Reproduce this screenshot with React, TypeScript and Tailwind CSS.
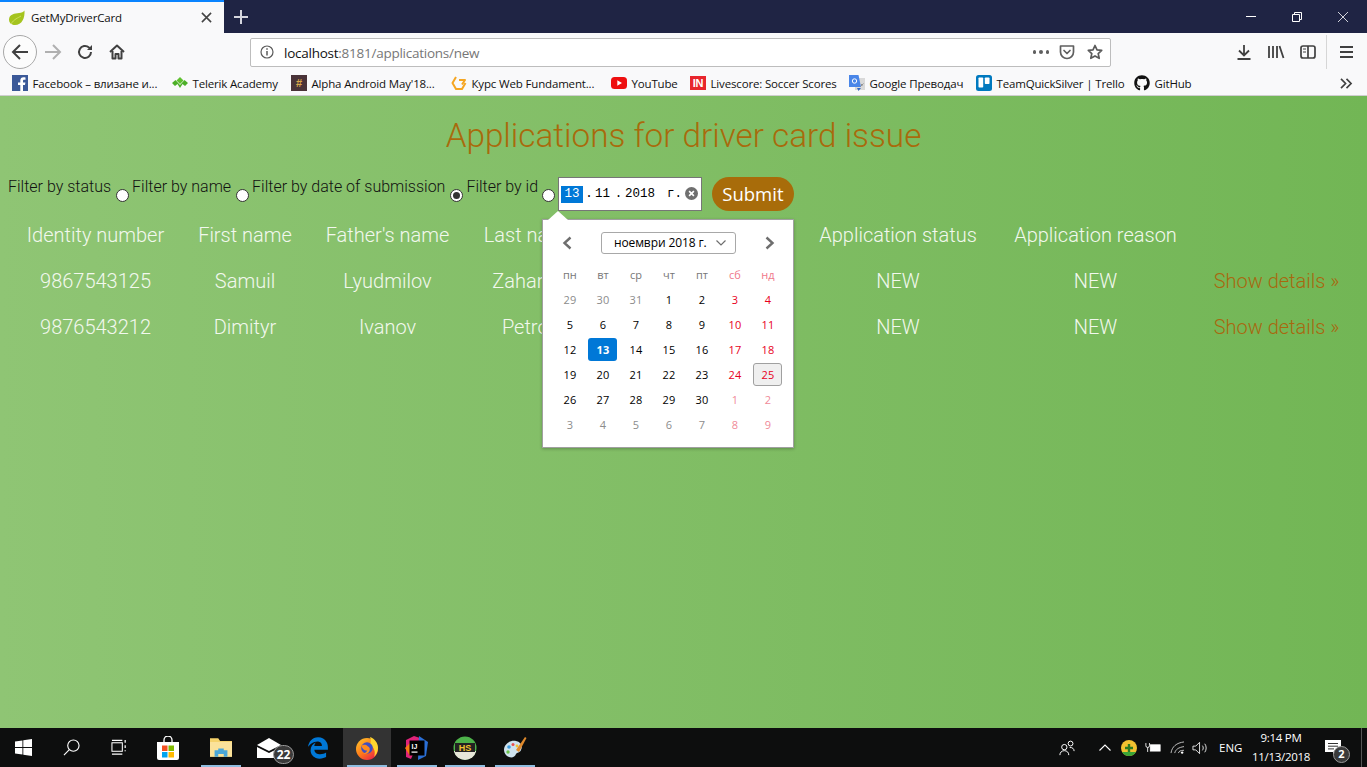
import { FaEdgeLegacy, FaGithub } from "react-icons/fa";

const sans = "font-['Open_Sans','Liberation_Sans',sans-serif]";

/* ── Browser chrome icons ── */
const BackIcon = () => (
  <svg viewBox="0 0 20 20" className="w-[20px] h-[20px]" fill="none" stroke="#404040" strokeWidth="2">
    <path d="M18 10H3M10 3l-7 7 7 7" />
  </svg>
);
const ForwardIcon = () => (
  <svg viewBox="0 0 20 20" className="w-[20px] h-[20px]" fill="none" stroke="#b0b0b0" strokeWidth="2">
    <path d="M2 10h15M10 3l7 7-7 7" />
  </svg>
);
const ReloadIcon = () => (
  <svg viewBox="0 0 16 16" className="w-[16px] h-[16px]" fill="none" stroke="#404040" strokeWidth="2">
    <path d="M14 8a6 6 0 1 1-2-4.500L14 5" />
    <path d="M15 1v5h-5" fill="#404040" stroke="none" />
  </svg>
);
const HomeIcon = () => (
  <svg viewBox="0 0 16 16" className="w-[16px] h-[16px]" fill="none" stroke="#404040" strokeWidth="2" strokeLinejoin="round">
    <path d="M1 8l7-6.500L15 8" />
    <path d="M3.500 7v7.500h3V10h3v4.500h3V7" />
  </svg>
);
const InfoIcon = () => (
  <svg viewBox="0 0 14 14" className="w-[14px] h-[14px]" fill="none" stroke="#5a5a5a" strokeWidth="1.200">
    <circle cx="7" cy="7" r="6" />
    <path d="M7 6v4.500" strokeWidth="1.500" />
    <path d="M7 3.200v1.600" strokeWidth="1.500" />
  </svg>
);
const PocketIcon = () => (
  <svg viewBox="0 0 16 16" className="w-[16px] h-[16px]" fill="none" stroke="#5f5f5f" strokeWidth="1.700" strokeLinecap="round" strokeLinejoin="round">
    <path d="M1.500 2h13v6a6.500 6.500 0 0 1-13 0z" />
    <path d="M5 6.500l3 3 3-3" />
  </svg>
);
const StarIcon = () => (
  <svg viewBox="0 0 16 16" className="w-[16px] h-[16px]" fill="none" stroke="#5a5a5a" strokeWidth="1.700" strokeLinejoin="round">
    <path d="M8 1.500l2 4.400 4.700.5-3.500 3.200 1 4.700L8 11.900l-4.200 2.400 1-4.700L1.300 6.400 6 5.900z" />
  </svg>
);
const DownloadIcon = () => (
  <svg viewBox="0 0 16 16" className="w-[16px] h-[16px]" fill="none" stroke="#404040" strokeWidth="1.800">
    <path d="M8 1v10M3 6.500L8 11.500l5-5M1.500 15h13" />
  </svg>
);
const LibraryIcon = () => (
  <svg viewBox="0 0 18 16" className="w-[18px] h-[16px]" fill="none" stroke="#404040" strokeWidth="1.800">
    <path d="M2 2v12M6 2v12M10 2v12M12.500 2l4 12" />
  </svg>
);
const SidebarIcon = () => (
  <svg viewBox="0 0 16 16" className="w-[16px] h-[16px]" fill="none" stroke="#404040" strokeWidth="1.700">
    <rect x="1" y="2" width="14" height="12" rx="2" />
    <path d="M8 2v12" />
    <path d="M3 5h3M3 8h3" strokeWidth="1" />
  </svg>
);

/* ── Favicons ── */
const SpringLeaf = () => (
  <svg viewBox="0 0 16 16" className="w-[16px] h-[16px]">
    <path d="M15.500.5C16 8 13 15 6 15 2 15 0 12.500 0 9.500 0 4 6 3.500 10 3c2.500-.3 4.500-1 5.500-2.500z" fill="#a5c41f" />
    <path d="M2 14C5 9 9 8 12 6" stroke="#d6e36c" strokeWidth="0.800" fill="none" />
  </svg>
);
const FacebookIcon = () => (
  <svg viewBox="0 0 16 16" className="w-[16px] h-[16px]">
    <rect width="16" height="16" fill="#3b5998" />
    <path d="M11 16v-6h2l.4-2.500H11V6c0-.8.3-1.200 1.200-1.200h1.300V2.500C13 2.400 12.300 2.300 11.500 2.300 9.500 2.300 8.300 3.500 8.300 5.600v1.900H6V10h2.300v6z" fill="#fff" />
  </svg>
);
const TelerikIcon = () => (
  <svg viewBox="0 0 16 16" className="w-[16px] h-[16px]">
    <path d="M8 2l3.500 3.500L8 9 4.500 5.500z" fill="#5fc12f" />
    <path d="M0 8l3.500-3 4.500 5 4.500-5L16 8l-3 3-2.500-2L8 13 5.500 9 3 11z" fill="#4caf27" />
  </svg>
);
const AlphaIcon = () => (
  <span className="w-[16px] h-[16px] bg-[#4a3338] text-[#dba94a] text-[11px] font-bold flex items-center justify-center font-['Liberation_Sans',sans-serif]">
    #
  </span>
);
const CourseIcon = () => (
  <svg viewBox="0 0 16 16" className="w-[16px] h-[16px]" fill="none" stroke="#f5a623" strokeWidth="2" strokeLinejoin="round">
    <path d="M5 2L1.500 8 5 14h6l3.500-6" />
    <path d="M8 5h6L11 9.500" />
  </svg>
);
const YoutubeIcon = () => (
  <svg viewBox="0 0 16 16" className="w-[16px] h-[16px]">
    <rect y="2" width="16" height="12" rx="3.500" fill="#ee0f0f" />
    <path d="M6.300 5.200v5.600L11 8z" fill="#fff" />
  </svg>
);
const LivescoreIcon = () => (
  <span className="w-[16px] h-[14px] bg-[#e8262d] text-white text-[11px] font-bold leading-none flex items-center justify-center font-['Liberation_Sans',sans-serif]">
    IN
  </span>
);
const TranslateIcon = () => (
  <svg viewBox="0 0 16 16" className="w-[16px] h-[16px]">
    <rect x="6" y="3" width="10" height="12" fill="#d9d9d9" />
    <path d="M0 0h9.500L12 12H0z" fill="#4a86e8" />
    <path d="M8 13l1.500 3 2.500-3z" fill="#3367c6" />
    <circle cx="5.500" cy="6" r="2.200" fill="none" stroke="#fff" strokeWidth="1" />
    <path d="M12 9l1.500 1.500M14.500 8.500l-3 3" stroke="#8a8a8a" strokeWidth="0.900" />
  </svg>
);
const TrelloIcon = () => (
  <svg viewBox="0 0 16 16" className="w-[16px] h-[16px]">
    <rect width="16" height="16" rx="2.500" fill="#0079bf" />
    <rect x="2.500" y="2.500" width="4.700" height="10" rx="0.800" fill="#fff" />
    <rect x="8.800" y="2.500" width="4.700" height="6.500" rx="0.800" fill="#fff" />
  </svg>
);

const bookmarks = [
  { Icon: FacebookIcon, label: "Facebook – влизане и...", width: "w-[160px]" },
  { Icon: TelerikIcon, label: "Telerik Academy", width: "w-[119px]" },
  { Icon: AlphaIcon, label: "Alpha Android May'18...", width: "w-[160px]" },
  { Icon: CourseIcon, label: "Курс Web Fundament...", width: "w-[160px]" },
  { Icon: YoutubeIcon, label: "YouTube", width: "w-[79px]" },
  { Icon: LivescoreIcon, label: "Livescore: Soccer Scores", width: "w-[159px]" },
  { Icon: TranslateIcon, label: "Google Преводач", width: "w-[127px]" },
  { Icon: TrelloIcon, label: "TeamQuickSilver | Trello", width: "w-[158px]" },
  { Icon: () => <FaGithub className="w-[16px] h-[16px] text-[#111]" />, label: "GitHub", width: "w-[70px]" },
];

/* ── Taskbar icons ── */
const WindowsLogo = () => (
  <svg viewBox="0 0 16 16" className="w-[17px] h-[17px]" fill="#fff">
    <path d="M0 2.300L7 1.300v6.300H0zM7.800 1.200L16 0v7.600H7.800zM0 8.400h7v6.300L0 13.700zM7.800 8.400H16V16l-8.200-1.200z" />
  </svg>
);
const SearchGlyph = () => (
  <svg viewBox="0 0 18 18" className="w-[17px] h-[17px]" fill="none" stroke="#fff" strokeWidth="1.200">
    <circle cx="11" cy="7" r="6" />
    <path d="M6.700 11.300L1 17" />
  </svg>
);
const TaskViewGlyph = () => (
  <svg viewBox="0 0 18 18" className="w-[17px] h-[17px]" fill="none" stroke="#fff" strokeWidth="1.100">
    <rect x="1" y="4" width="11" height="9" />
    <path d="M1 1.500h11M1 16h11M15 1v3M15 6.500v3M15 12v1" strokeWidth="1.300" />
  </svg>
);
const StoreGlyph = () => (
  <svg viewBox="0 0 24 24" className="w-[24px] h-[24px]">
    <path d="M8 7V4a4 4 0 0 1 8 0v3" fill="none" stroke="#fff" strokeWidth="1.300" />
    <path d="M1 6h22v16a2 2 0 0 1-2 2H3a2 2 0 0 1-2-2z" fill="#fff" />
    <rect x="6" y="9.500" width="5.500" height="5.500" fill="#f25022" />
    <rect x="12.500" y="9.500" width="5.500" height="5.500" fill="#7fba00" />
    <rect x="6" y="16" width="5.500" height="5.500" fill="#00a4ef" />
    <rect x="12.500" y="16" width="5.500" height="5.500" fill="#ffb900" />
  </svg>
);
const FolderGlyph = () => (
  <svg viewBox="0 0 24 20" className="w-[22px] h-[19px]">
    <path d="M0 0h9l2 3h13v17H0z" fill="#f6d36b" />
    <path d="M0 4h24v16H0z" fill="#fbe29a" />
    <path d="M5 20v-7h4v-2h6v2h4v7h-4v-3H9v3z" fill="#4aa7d8" />
  </svg>
);
const MailGlyph = () => (
  <svg viewBox="0 0 24 20" className="w-[24px] h-[20px]" fill="#fff">
    <path d="M0 7l12-7 12 7-12 6z" />
    <path d="M0 9l12 6 12-6v11H0z" />
  </svg>
);
const FirefoxGlyph = () => (
  <svg viewBox="0 0 24 24" className="w-[24px] h-[24px]">
    <defs>
      <linearGradient id="fx" x1="0" y1="0" x2="0.8" y2="1">
        <stop offset="0" stopColor="#ffcb2e" />
        <stop offset="0.55" stopColor="#ff7a18" />
        <stop offset="1" stopColor="#e8204a" />
      </linearGradient>
    </defs>
    <circle cx="12" cy="13" r="11" fill="url(#fx)" />
    <path d="M15 1c5 2 8 6 8 11 0 4-2 7-4 9 2-5 0-10-4-12 1-3 1-6 0-8z" fill="#ffd52e" />
    <circle cx="12" cy="12" r="5.800" fill="#3d4fc4" />
    <path d="M6.500 10c2-2 5-1 6 0 1.500 1 3 2 2 5-1 2.500-4 3.500-6.500 2.500C10 17 12 16 12 14.500 10 15 7 13 6.500 10z" fill="#ff8a1e" />
  </svg>
);
const IdeaGlyph = () => (
  <svg viewBox="0 0 24 24" className="w-[24px] h-[24px]">
    <path d="M1 4l8-4 6 2-9 21-5-2z" fill="#e0237a" />
    <path d="M14 0l9 6-2 14-8 4z" fill="#2a6fd6" />
    <path d="M0 12l6-6 4 6-5 8z" fill="#f97a12" />
    <rect x="4.500" y="4.500" width="15" height="15" fill="#000" />
    <text x="6.500" y="12.500" fontSize="7" fill="#fff" fontWeight="700" fontFamily="Liberation Sans, sans-serif">IJ</text>
    <rect x="6.500" y="15.500" width="6" height="1.200" fill="#fff" />
  </svg>
);
const HsGlyph = () => (
  <svg viewBox="0 0 24 24" className="w-[24px] h-[24px]">
    <circle cx="12" cy="12" r="11.500" fill="#4db34a" />
    <path d="M.8 15h22.400A11.500 11.500 0 0 1 .8 15z" fill="#e6e6d8" />
    <rect x="2" y="7" width="20" height="9" fill="#222" />
    <text x="12" y="14.800" fontSize="9" fill="#f2c12e" fontWeight="700" textAnchor="middle" fontFamily="Liberation Sans, sans-serif">HS</text>
  </svg>
);
const PaintGlyph = () => (
  <svg viewBox="0 0 24 24" className="w-[24px] h-[24px]">
    <path d="M1 14C1 8 7 4 13 5c5 1 7 5 5 9-1 3-4 2-5 4-1 3-4 4-7 3-3-1-5-4-5-7z" fill="#cfe3ee" />
    <circle cx="6" cy="11" r="1.800" fill="#3c9be0" />
    <circle cx="10" cy="8.500" r="1.500" fill="#e94f4f" />
    <circle cx="5" cy="16" r="1.700" fill="#6ac24a" />
    <circle cx="14" cy="10" r="1.400" fill="#f4c430" />
    <path d="M13 14L22 1l1.500 1L16 16z" fill="#e08a2c" />
  </svg>
);

const taskbarApps = [
  { Icon: WindowsLogo, cell: "w-[46px]" },
  { Icon: SearchGlyph, cell: "w-[50px]" },
  { Icon: TaskViewGlyph, cell: "w-[46px]" },
  { Icon: StoreGlyph, cell: "w-[52px]" },
];

const Underlined = ({ children, active }: { children: React.ReactNode; active?: boolean }) => (
  <div className={`relative h-full w-[48px] flex items-center justify-center ${active ? "bg-[#333333]" : ""}`}>
    {children}
    <span className="absolute bottom-0 left-[4px] right-[4px] h-[2px] bg-[#8fbde0]" />
  </div>
);

/* ── Page content ── */
const headers = ["Identity number", "First name", "Father's name", "Last name", "", "Application status", "Application reason", ""];

const rows = [
  ["9867543125", "Samuil", "Lyudmilov", "Zahariev"],
  ["9876543212", "Dimityr", "Ivanov", "Petrov"],
];

const Radio = ({ checked }: { checked?: boolean }) => (
  <span className="ml-[5px] mr-[3px] mt-[12px] w-[13px] h-[13px] rounded-full bg-white border border-[#333] flex items-center justify-center shrink-0">
    {checked && <span className="w-[7px] h-[7px] rounded-full bg-[#333]" />}
  </span>
);

const weeks = [
  ["29", "30", "31", "1", "2", "3", "4"],
  ["5", "6", "7", "8", "9", "10", "11"],
  ["12", "13", "14", "15", "16", "17", "18"],
  ["19", "20", "21", "22", "23", "24", "25"],
  ["26", "27", "28", "29", "30", "1", "2"],
  ["3", "4", "5", "6", "7", "8", "9"],
];

const dayColor = (row: number, col: number, day: string) => {
  const outside = (row === 0 && Number(day) > 20) || row === 5 || (row === 4 && Number(day) < 10);
  if (col >= 5) return outside ? "text-[#f08a98]" : "text-[#e8001c]";
  return outside ? "text-[#8c8c8c]" : "text-black";
};

const Calendar = () => (
  <div className={`absolute left-[-17px] top-[41px] w-[252px] h-[229px] bg-white border border-[#a0a0a0] shadow-[0_1px_3px_rgba(0,0,0,0.25)] px-[10px] pt-[12px] font-normal ${sans}`}>
    <svg viewBox="0 0 20 9" className="absolute left-[5px] top-[-9px] w-[20px] h-[9px]">
      <path d="M0 9L10 0l10 9z" fill="#fff" />
    </svg>
    <div className="flex items-center h-[22px]">
      <svg viewBox="0 0 12 14" className="ml-[8px] w-[12px] h-[14px]" fill="none" stroke="#6e6e6e" strokeWidth="2.400">
        <path d="M9.500 1.500L3.500 7l6 5.500" />
      </svg>
      <div className="ml-[28px] w-[135px] h-[22px] border border-[#a8a8a8] rounded-[3px] flex items-center pl-[12px] text-[12px] tracking-[-0.1px] text-black">
        ноември 2018 г.
        <svg viewBox="0 0 10 6" className="ml-[9px] w-[10px] h-[6px]" fill="none" stroke="#6e6e6e" strokeWidth="1.200">
          <path d="M.5.500L5 5 9.500.500" />
        </svg>
      </div>
      <svg viewBox="0 0 12 14" className="ml-[28px] w-[12px] h-[14px]" fill="none" stroke="#6e6e6e" strokeWidth="2.400">
        <path d="M2.500 1.500L8.500 7l-6 5.500" />
      </svg>
    </div>
    <div className="grid grid-cols-[repeat(7,33px)] auto-rows-[25px] mt-[8px] ml-[0.5px] text-[11px] text-center items-center justify-items-center">
      {["пн", "вт", "ср", "чт", "пт", "сб", "нд"].map((d, i) => (
        <span key={d} className={i >= 5 ? "text-[#f0788a]" : "text-[#777]"}>{d}</span>
      ))}
      {weeks.map((week, r) =>
        week.map((day, c) => {
          const selected = r === 2 && c === 1;
          const today = r === 3 && c === 6;
          return (
            <span
              key={`${r}-${c}`}
              className={`flex items-center justify-center w-[29px] h-[23px] rounded-[3px] ${
                selected
                  ? "bg-[#0078d7] text-white font-bold"
                  : today
                  ? "bg-[#efefef] border border-[#a0a0a0] text-[#e8001c]"
                  : dayColor(r, c, day)
              }`}
            >
              {day}
            </span>
          );
        })
      )}
    </div>
  </div>
);

const DateInput = () => (
  <div className="relative w-[144px] h-[34px] bg-white border border-[#767676] flex items-center font-['Liberation_Mono',monospace] font-normal text-[12.500px] text-black">
    <span className="ml-[2px] w-[22px] h-[17px] bg-[#0078d7] text-white flex items-center justify-center leading-none">13</span>
    <span className="ml-px w-[10px] text-center">.</span>
    <span className="w-[16px] ml-[1px]">11</span>
    <span className="ml-px w-[13px] text-center">.</span>
    <span className="w-[32px]">2018</span>
    <span className="ml-[10px]">г.</span>
    <svg viewBox="0 0 12 12" className="absolute right-[3px] top-[9px] w-[13px] h-[13px]">
      <circle cx="6" cy="6" r="6" fill="#6f6f6f" />
      <path d="M3.800 3.800l4.400 4.400M8.200 3.800L3.800 8.200" stroke="#fff" strokeWidth="1.500" />
    </svg>
    <Calendar />
  </div>
);

export default function App() {
  return (
    <div className="w-[1367px] h-[767px] overflow-hidden flex flex-col">
      {/* Tab strip */}
      <div className="h-[33px] bg-[#1f2444] flex items-stretch shrink-0">
        <div className={`w-[224px] bg-[#f9f9fa] border-t-2 border-[#0a84ff] flex items-center pl-[9px] ${sans} text-[11.500px] tracking-[-0.15px] text-[#111]`}>
          <SpringLeaf />
          <span className="ml-[6px]">GetMyDriverCard</span>
          <svg viewBox="0 0 12 12" className="ml-auto mr-[12px] w-[11px] h-[11px]" fill="none" stroke="#444" strokeWidth="1.700">
            <path d="M1 1l10 10M11 1L1 11" />
          </svg>
        </div>
        <div className="w-[34px] flex items-center justify-center">
          <svg viewBox="0 0 14 14" className="w-[14px] h-[14px]" fill="none" stroke="#d5d6de" strokeWidth="2">
            <path d="M7 0v14M0 7h14" />
          </svg>
        </div>
        <div className="ml-auto mr-px flex">
          <div className="w-[46px] flex items-center justify-center">
            <span className="w-[10px] h-px bg-white" />
          </div>
          <div className="w-[46px] flex items-center justify-center">
            <svg viewBox="0 0 10 10" className="w-[10px] h-[10px]" fill="none" stroke="#fff">
              <path d="M.5 2.500h7v7h-7zM2.500 2.500v-2h7v7h-2" />
            </svg>
          </div>
          <div className="w-[46px] flex items-center justify-center">
            <svg viewBox="0 0 10 10" className="w-[10px] h-[10px]" fill="none" stroke="#fff" strokeWidth="0.800">
              <path d="M0 0l10 10M10 0L0 10" />
            </svg>
          </div>
        </div>
      </div>

      {/* Nav toolbar */}
      <div className="h-[37px] pt-px bg-[#f9f9fa] flex items-center shrink-0">
        <div className="ml-[3px] w-[34px] h-[34px] rounded-full border border-[#a8a8a8] bg-[#fcfcfc] flex items-center justify-center">
          <BackIcon />
        </div>
        <div className="ml-[6px] w-[20px] flex justify-center"><ForwardIcon /></div>
        <div className="ml-[12px] w-[20px] flex justify-center"><ReloadIcon /></div>
        <div className="ml-[12px] w-[20px] flex justify-center"><HomeIcon /></div>
        <div className={`ml-[123px] w-[861px] h-[29px] bg-white border border-[#bdbdbd] rounded-[2px] flex items-center pl-[9px] pr-[7px] ${sans} text-[13.500px] tracking-[-0.25px]`}>
          <InfoIcon />
          <span className="ml-[10px] pt-[3px] text-[#111]">localhost</span>
          <span className="pt-[3px] text-[#777]">:8181/applications/new</span>
          <span className="ml-auto flex gap-[3px] mr-[10px]">
            <span className="w-[3.500px] h-[3.500px] rounded-full bg-[#5f5f5f]" />
            <span className="w-[3.500px] h-[3.500px] rounded-full bg-[#5f5f5f]" />
            <span className="w-[3.500px] h-[3.500px] rounded-full bg-[#5f5f5f]" />
          </span>
          <PocketIcon />
          <span className="ml-[12px]"><StarIcon /></span>
        </div>
        <div className="ml-[125px]"><DownloadIcon /></div>
        <div className="ml-[15px]"><LibraryIcon /></div>
        <div className="ml-[15px]"><SidebarIcon /></div>
        <div className="ml-[10px] w-px h-[34px] bg-[#d6d6d6]" />
        <div className="ml-[13px] flex flex-col gap-[3px]">
          <span className="w-[13px] h-[2px] bg-[#404040]" />
          <span className="w-[13px] h-[2px] bg-[#404040]" />
          <span className="w-[13px] h-[2px] bg-[#404040]" />
        </div>
      </div>

      {/* Bookmarks */}
      <div className={`h-[26px] pt-px bg-[#f9f9fa] border-b border-[#cfcfcf] flex items-center pl-[12px] shrink-0 ${sans} text-[11.500px] tracking-[-0.16px] text-[#111]`}>
        {bookmarks.map(({ Icon, label, width }) => (
          <div key={label} className={`${width} flex items-center shrink-0`}>
            <span className="w-[16px] flex justify-center shrink-0"><Icon /></span>
            <span className="ml-[4.500px] pt-[2px] whitespace-nowrap">{label}</span>
          </div>
        ))}
        <svg viewBox="0 0 14 12" className="ml-auto mr-[14px] w-[13px] h-[11px]" fill="none" stroke="#404040" strokeWidth="1.800">
          <path d="M1 1l5 5-5 5M7 1l5 5-5 5" />
        </svg>
      </div>

      {/* Page */}
      <div className="flex-1 bg-gradient-to-r from-[#8fc574] to-[#72b655] font-['Roboto',sans-serif] font-light">
        <h1 className="h-[81px] pt-[20px] text-center text-[33.300px] leading-[40px] font-light text-[#a96a0c]">
          Applications for driver card issue
        </h1>
        <div className="flex items-start pl-[8px] h-[35px] text-[16px] leading-[20px] text-[#111]">
          <span>Filter by status</span>
          <Radio />
          <span>Filter by name</span>
          <Radio />
          <span>Filter by date of submission</span>
          <Radio checked />
          <span className="w-[70.500px] whitespace-nowrap">Filter by id</span>
          <Radio />
          <DateInput />
          <button className={`ml-[10px] w-[82px] h-[34px] rounded-full bg-[#a86c0a] text-white text-[18.500px] font-normal leading-none ${sans}`}>
            Submit
          </button>
        </div>
        <div className="grid grid-cols-[171px_128px_157px_128px_208px_192px_203px_159px] ml-[10px] auto-rows-[46px] items-center text-center text-[20px] text-[#f2f8ee]">
          {headers.map((h, i) => (
            <span key={i}>{h}</span>
          ))}
          {rows.map((row) => (
            <div key={row[0]} className="contents">
              {row.map((cell) => (
                <span key={cell}>{cell}</span>
              ))}
              <span />
              <span>NEW</span>
              <span>NEW</span>
              <span className="text-[#a8680f]">Show details »</span>
            </div>
          ))}
        </div>
      </div>

      {/* Taskbar */}
      <div className={`h-[39px] bg-[#0d0e0e] flex items-stretch shrink-0 ${sans} text-white`}>
        {taskbarApps.map(({ Icon, cell }, i) => (
          <div key={i} className={`${cell} flex items-center justify-center`}><Icon /></div>
        ))}
        <div className="ml-[3px]"><Underlined><FolderGlyph /></Underlined></div>
        <div className="relative w-[48px] flex items-center justify-center">
          <MailGlyph />
          <span className="absolute right-[-1px] top-[17px] w-[21px] h-[19px] rounded-full bg-[#3a3a3a] border border-[#9a9a9a] text-[12px] font-bold flex items-center justify-center">22</span>
        </div>
        <div className="w-[50px] flex items-center justify-center">
          <FaEdgeLegacy className="w-[22px] h-[22px] text-[#0078d7]" />
        </div>
        <Underlined active><FirefoxGlyph /></Underlined>
        <div className="ml-[2px]"><Underlined><IdeaGlyph /></Underlined></div>
        <Underlined><HsGlyph /></Underlined>
        <div className="ml-[2px]"><Underlined><PaintGlyph /></Underlined></div>

        <div className="ml-auto flex items-center">
          <svg viewBox="0 0 18 18" className="w-[16px] h-[16px]" fill="none" stroke="#fff" strokeWidth="1.100">
            <circle cx="6" cy="8" r="3" />
            <path d="M1 17c0-3 2-5 5-5s5 2 5 5" />
            <circle cx="13" cy="4" r="2.700" />
            <path d="M12 8.500c3-.5 5 1.500 5 4" />
          </svg>
          <svg viewBox="0 0 12 7" className="ml-[24px] w-[12px] h-[7px]" fill="none" stroke="#fff" strokeWidth="1.100">
            <path d="M.5 6.500L6 1l5.500 5.500" />
          </svg>
          <svg viewBox="0 0 16 16" className="ml-[10px] w-[16px] h-[16px]">
            <circle cx="8" cy="8" r="8" fill="#f2c230" />
            <path d="M8 16A8 8 0 0 1 1 12h14a8 8 0 0 1-7 4z" fill="#3aa536" />
            <path d="M8 4v8M4 8h8" stroke="#2c7a20" strokeWidth="2.400" />
          </svg>
          <svg viewBox="0 0 18 12" className="ml-[8px] w-[16px] h-[11px]" fill="none" stroke="#fff">
            <rect x="6" y="3" width="11" height="7" fill="#fff" />
            <path d="M1 1v3a2 2 0 0 0 4 0V1M3 6v5" />
          </svg>
          <svg viewBox="0 0 16 14" className="ml-[9px] w-[15px] h-[13px]" fill="none" stroke="#c8c8c8">
            <path d="M1 13C2 6 7 2 15 1M5 13c1-4 4-6 10-7M9 13c.5-2 2-3 6-3" />
            <circle cx="13" cy="12.500" r="1.300" fill="#fff" stroke="none" />
          </svg>
          <svg viewBox="0 0 18 14" className="ml-[7px] w-[17px] h-[14px]" fill="none" stroke="#fff" strokeWidth="0.900">
            <path d="M1 5h3l4-4v12l-4-4H1zM11 4.500c1.200 1.500 1.200 3.500 0 5M13.500 2.500c2 2.500 2 6.500 0 9" />
          </svg>
          <span className="ml-[10px] w-[28px] text-[11.500px]">ENG</span>
          <div className="ml-px pb-[2px] w-[66px] flex flex-col items-center text-[11.500px] tracking-[-0.3px] leading-[19px]">
            <span>9:14 PM</span>
            <span>11/13/2018</span>
          </div>
          <div className="relative ml-[11px] mr-[20px] w-[16px] h-[16px]">
            <svg viewBox="0 0 16 16" className="w-[16px] h-[16px]">
              <path d="M0 0h16v12h-6l-2 3v-3H0z" fill="#fff" />
              <path d="M3 3.500h10M3 6.200h10M3 8.900h6" stroke="#333" />
            </svg>
            <span className="absolute left-[8px] top-[6px] w-[17px] h-[17px] rounded-full bg-[#3a3a3a] border border-[#999] text-[11px] font-bold flex items-center justify-center">2</span>
          </div>
          <div className="w-px self-stretch bg-[#555] mr-[5px]" />
        </div>
      </div>
    </div>
  );
}
